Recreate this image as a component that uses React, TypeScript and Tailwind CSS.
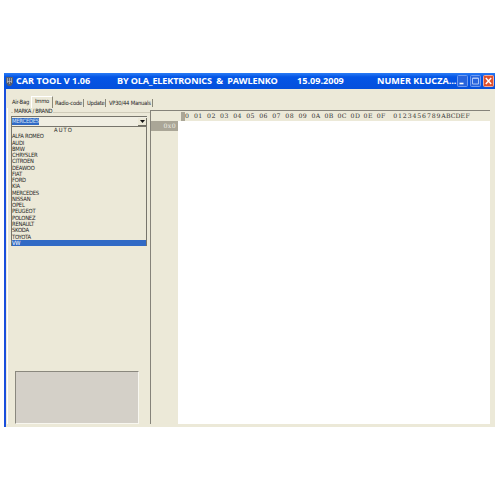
import React from "react";

const brands = [
  "ALFA ROMEO", "AUDI", "BMW", "CHRYSLER", "CITROEN", "DEAWOO", "FIAT", "FORD", "KIA",
  "MERCEDES", "NISSAN", "OPEL", "PEUGEOT", "POLONEZ", "RENAULT", "SKODA", "TOYOTA",
];
const columns = ["01", "02", "03", "04", "05", "06", "07", "08", "09", "0A", "0B", "0C", "0D", "0E", "0F"];

function TitleBar() {
  return (
    <header className="flex h-[16px] shrink-0 items-center bg-gradient-to-b from-[#2a7cf5] via-[#0455e6] via-25% to-[#0550dc] pl-[2px] font-['Open_Sans',sans-serif] text-[9.1px] leading-none font-bold tracking-normal whitespace-pre text-white">
      <svg className="mr-[3px] h-[9px] w-[7px] shrink-0" viewBox="0 0 7 9">
        <path d="M0 0h7v6L5 9H2L0 6z" fill="#565e70" />
        <path d="M1.5 1v5M3.5 1v6M5.5 1v5M1 4.5h5" stroke="#b9bdc4" strokeWidth=".7" />
      </svg>
      <span className="w-[101px] shrink-0">CAR TOOL V 1.06</span>
      <span className="w-[180px] shrink-0 tracking-[-0.16px]">BY OLA_ELEKTRONICS  &amp;  PAWLENKO</span>
      <span className="w-[80px] shrink-0">15.09.2009</span>
      <span className="w-[80px] shrink-0">NUMER KLUCZA...</span>
      <div className="flex gap-[2px]">
        <svg className="h-[12px] w-[11px]" viewBox="0 0 11 12">
          <rect x=".5" y=".5" width="10" height="11" rx="1" fill="#2864dc" stroke="#6f9bf0" />
          <path d="M2.5 8.5h4" stroke="#fff" strokeWidth="1.6" />
        </svg>
        <svg className="h-[12px] w-[11px]" viewBox="0 0 11 12">
          <rect x=".5" y=".5" width="10" height="11" rx="1" fill="#2864dc" stroke="#6f9bf0" />
          <path d="M2.5 3h6v6h-6zM2.5 3.5h6" stroke="#a9c3f6" fill="none" />
        </svg>
        <svg className="h-[12px] w-[11px]" viewBox="0 0 11 12">
          <rect x=".5" y=".5" width="10" height="11" rx="1" fill="#df512e" stroke="#f0ab9a" />
          <path d="M2.8 3l5.4 6M8.2 3L2.8 9" stroke="#fff" strokeWidth="1.4" />
        </svg>
      </div>
    </header>
  );
}

function Tabs() {
  return (
    <nav className="flex h-[19px] shrink-0 items-end pl-[6px] whitespace-nowrap">
      <span className="w-[19px] pb-[2px]">Air-Bag</span>
      <span className="flex h-[12px] w-[22px] items-center border-t border-r border-l border-t-white border-r-[#8b8878] border-l-white pb-[2px] pl-[3px]">Immo</span>
      <span className="mb-[1px] ml-px h-[8px] w-[30px] border-r border-[#8b8878] pl-[1px] leading-[8px]">Radio-code</span>
      <span className="mb-[1px] h-[8px] w-[22px] border-r border-[#8b8878] pl-[3px] leading-[8px]">Update</span>
      <span className="mb-[1px] h-[8px] w-[47px] border-r border-[#8b8878] pl-[3px] leading-[8px]">VP30/44 Manuals</span>
    </nav>
  );
}

function BrandPanel() {
  return (
    <aside className="flex w-[142px] shrink-0 flex-col pl-[3px]">
      <div className="flex h-[8px] items-center">
        <span className="h-px w-[2px] bg-[#c9c5b2]" />
        <span className="px-px tracking-[-0.3px]">MARKA / BRAND</span>
        <span className="h-px flex-1 bg-[#d0ccba]" />
      </div>
      <div className="flex h-[10px] w-[136px] items-center justify-between border-t border-l border-[#77756c] bg-[#f0eee2]">
        <span className="h-[7px] w-[27px] bg-[#316ac5] leading-[7px] text-[#d5e2f5]">MERCEDES</span>
        <span className="flex h-[8px] w-[9px] items-center justify-center border-r border-b border-[#716f64] bg-[#ece9d8]">
          <svg className="h-[3px] w-[5px]" viewBox="0 0 5 3"><path d="M0 0h5L2.5 3z" fill="#111" /></svg>
        </span>
      </div>
      <div className="h-[120px] w-[136px] border border-[#77756c]">
        <div className="h-[6.27px] pl-[42px] leading-[6.27px] tracking-[1.1px]">AUTO</div>
        {brands.map((brand) => (
          <div key={brand} className="h-[6.27px] leading-[6.27px]">{brand}</div>
        ))}
        <div className="h-[6px] bg-[#316ac5] leading-[6px] text-white">VW</div>
      </div>
      <div className="mt-auto ml-[4px] h-[53px] w-[124px] border border-t-[#8a887e] border-r-[#f8f7f0] border-b-[#f8f7f0] border-l-[#8a887e] bg-[#d4d0c8]" />
    </aside>
  );
}

function HexView() {
  return (
    <section className="mt-[2px] flex min-w-0 flex-1 flex-col border-t border-l border-[#85837a] font-['DejaVu_Serif',serif] text-[6.2px] tracking-normal">
      <div className="flex h-[10px] shrink-0 items-center pl-[30px] leading-none whitespace-nowrap text-[#333]">
        <span className="h-[9px] w-[4px] bg-[#aaa697]" />
        <span className="w-[9px]">0</span>
        {columns.map((column) => (
          <span key={column} className="w-[13.05px] tracking-[0.4px]">{column}</span>
        ))}
        <span className="ml-[3px] flex">
          {Array.from("0123456789ABCDEF").map((character) => (
            <span key={character} className="w-[4.83px] text-center">{character}</span>
          ))}
        </span>
      </div>
      <div className="flex flex-1">
        <div className="w-[27px] shrink-0">
          <div className="h-[10px] bg-[#aaa697] pr-[2px] text-right leading-[10px] tracking-[0.4px] text-[#f0eee4]">0x0</div>
        </div>
        <div className="flex-1 bg-white" />
      </div>
    </section>
  );
}

export default function App() {
  return (
    <div className="flex h-[500px] w-[500px] bg-white pt-[73px] pl-[4px]">
      <main className="flex h-[354px] w-[491px] flex-col bg-[#ece9d8] font-['DejaVu_Sans_Condensed','DejaVu_Sans',sans-serif] text-[5.8px] leading-none tracking-[-0.22px] text-[#252525]">
        <TitleBar />
        <div className="flex flex-1 flex-col border-l-2 border-[#1a4fdc] pb-[3px]">
          <Tabs />
          <div className="mr-[5px] ml-px flex flex-1 border-l border-white">
            <BrandPanel />
            <HexView />
          </div>
        </div>
      </main>
    </div>
  );
}
